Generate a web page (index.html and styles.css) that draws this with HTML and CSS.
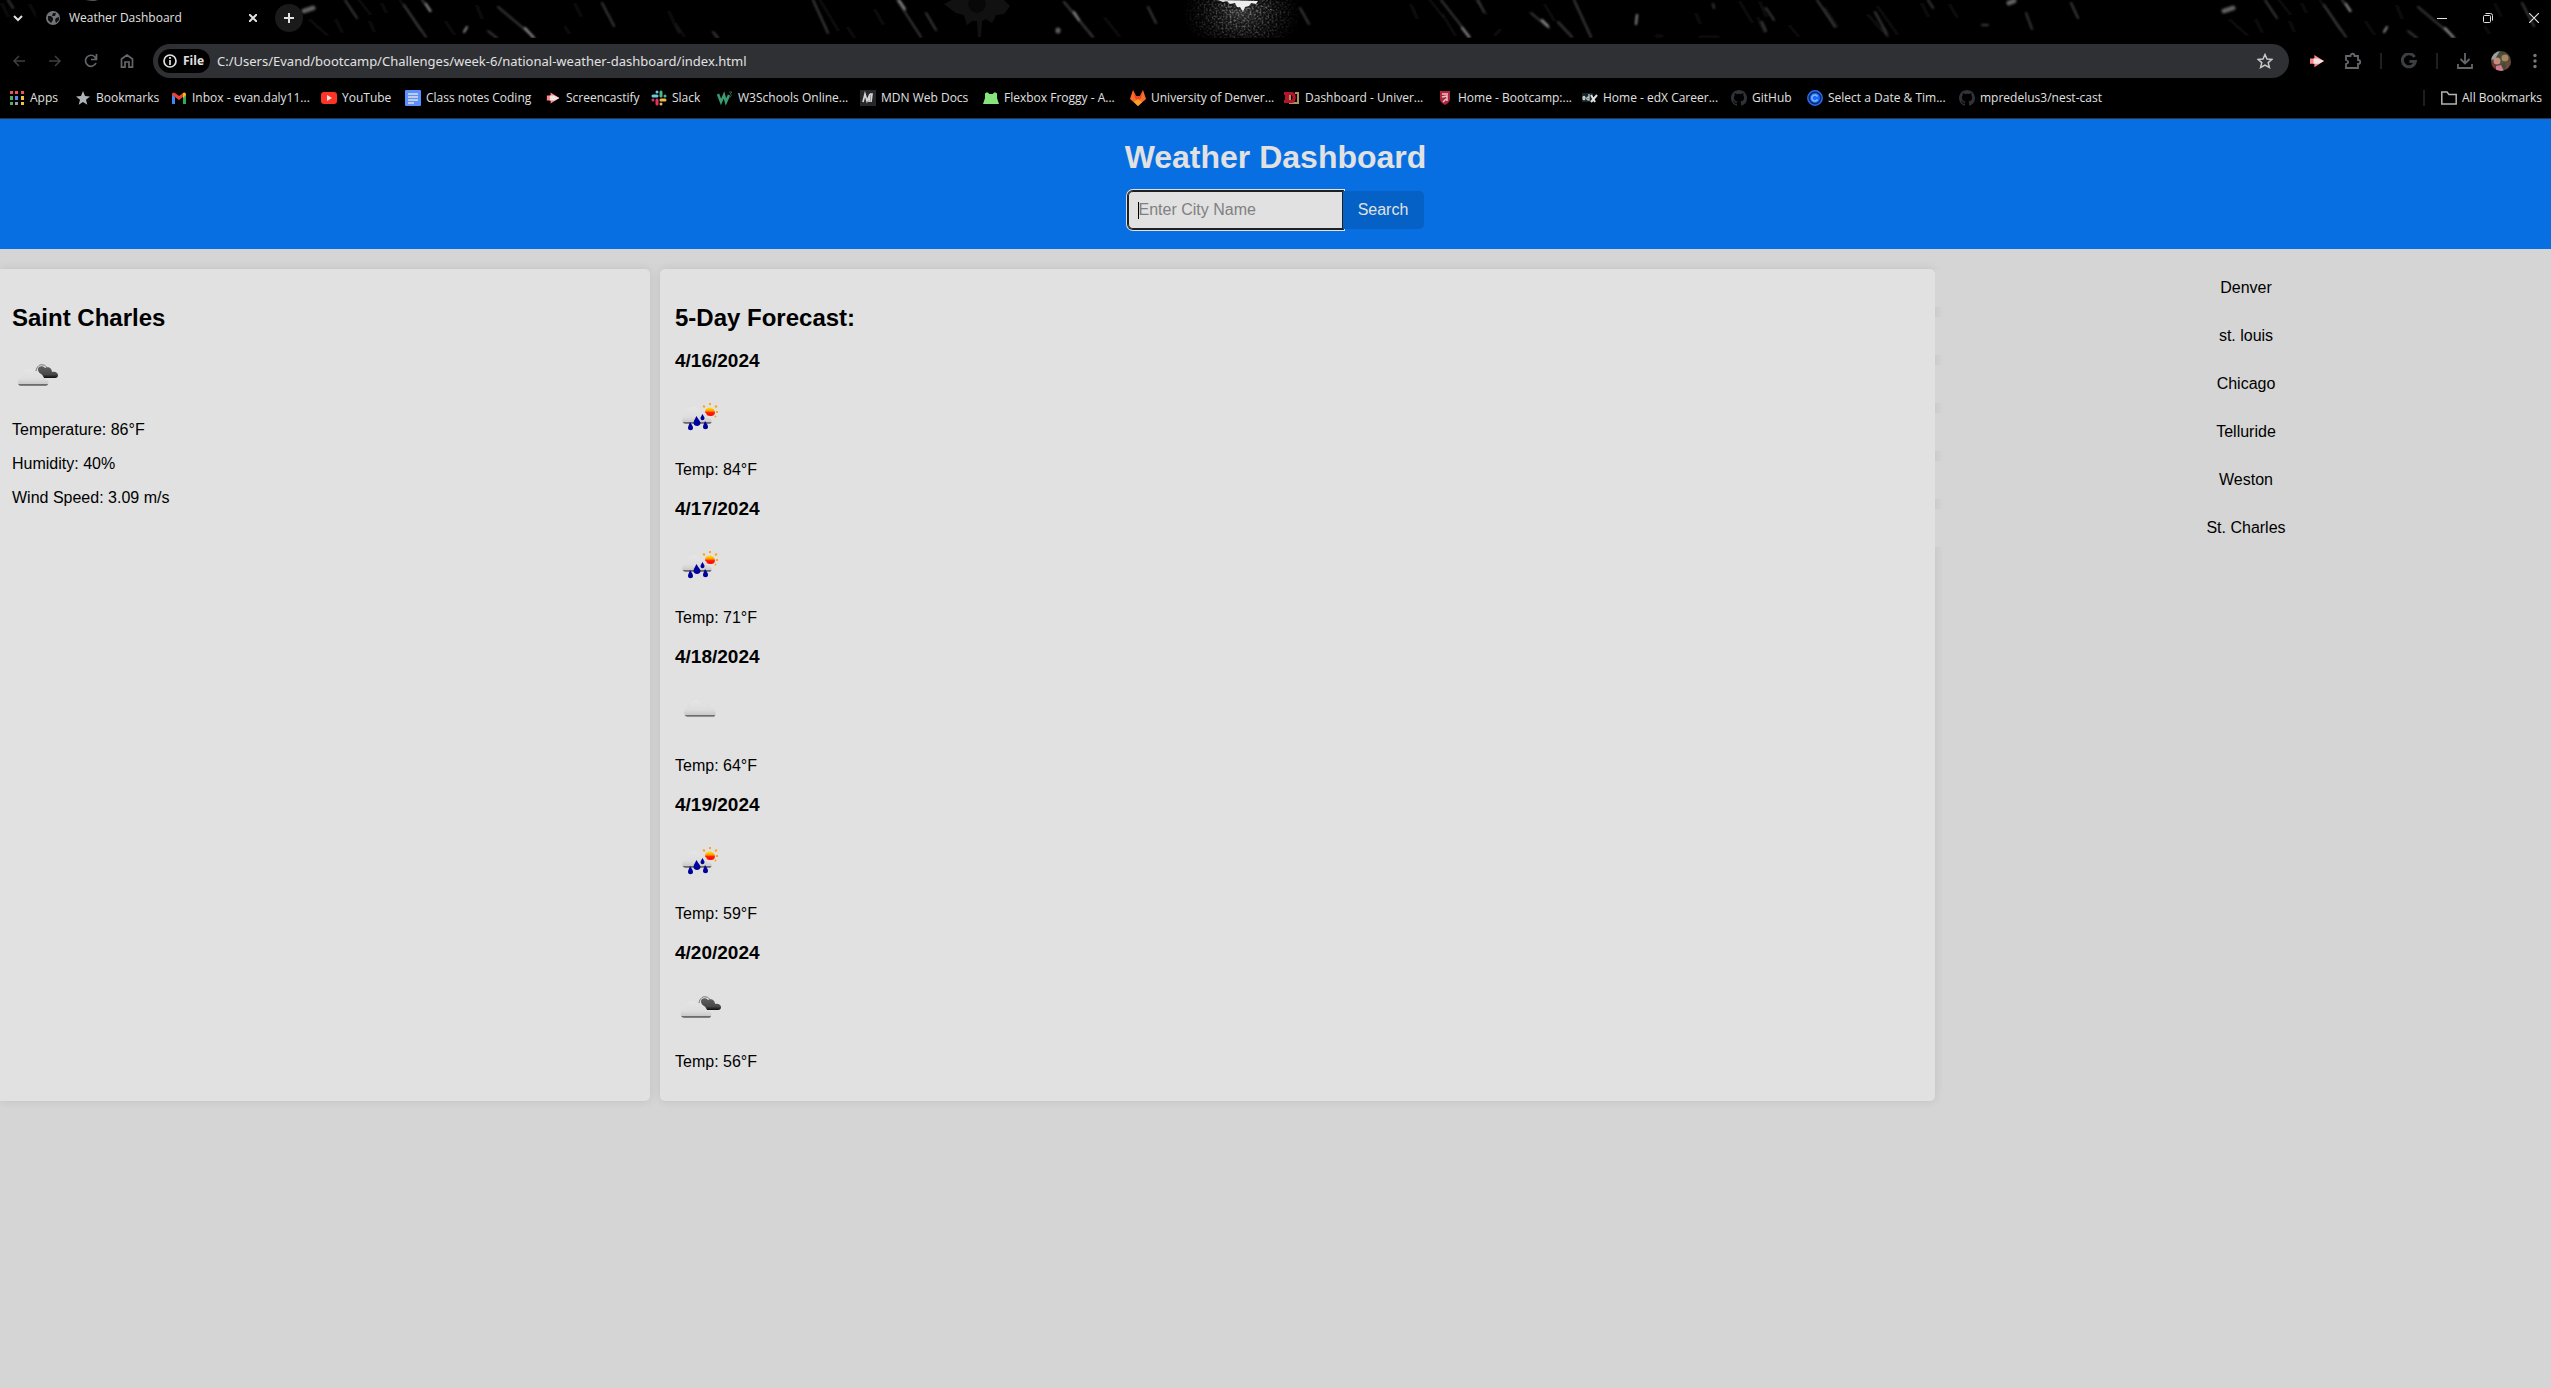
FILE: index.html
```html
<!DOCTYPE html>
<html lang="en">
<head>
<meta charset="utf-8">
<meta name="viewport" content="width=device-width, initial-scale=1">
<title>Weather Dashboard</title>
<link rel="stylesheet" href="styles.css">
</head>
<body>
<svg class="defs" aria-hidden="true">
  <defs>
    <linearGradient id="cloudFill" x1="0" y1="0" x2="0" y2="1">
      <stop offset="0" stop-color="#e6e6e6"/><stop offset=".6" stop-color="#dddddd"/><stop offset=".87" stop-color="#cacaca"/><stop offset=".91" stop-color="#6c6c6c"/><stop offset="1" stop-color="#888"/>
    </linearGradient>
    <linearGradient id="darkFill" x1="0" y1="0" x2="0" y2="1">
      <stop offset="0" stop-color="#606060"/><stop offset=".7" stop-color="#484848"/><stop offset="1" stop-color="#0c0c0c"/>
    </linearGradient>
    <linearGradient id="sunFill" x1="0" y1="0" x2="0" y2="1">
      <stop offset="0" stop-color="#ffe800"/><stop offset=".4" stop-color="#ff9a00"/><stop offset=".6" stop-color="#ff1c00"/><stop offset="1" stop-color="#ff0800"/>
    </linearGradient>
    <symbol id="broken" viewBox="0 0 50 50">
      <path d="M24 20c1-5 4-7 7-6 2 0 3 1 4 3" fill="none" stroke="#777" stroke-width="1"/>
      <path d="M26 18c0-3 5-4 7-1 3-2 7 0 7 4 3-1 6 1 6 3s-1 3-3 3H32c-1-4-6-4-6-9z" fill="url(#darkFill)"/>
      <path d="M9 35c-4 0-5-8 1-9 0-5 3-8 7-8 3 0 5 2 6 4 5-1 8 2 8 5 6 0 7 7 3 8z" fill="url(#cloudFill)"/>
    </symbol>
    <symbol id="cloud" viewBox="0 0 50 50">
      <path d="M12 30c-4-1-4-8 1-9 0-4 3-9 8-9 3 0 5 2 6 5 5-1 7 1 7 4 7-1 8 7 5 9z" fill="url(#cloudFill)" stroke="#d6d6d6" stroke-width=".4"/>
    </symbol>
    <symbol id="rain" viewBox="0 0 50 50">
      <path d="M35 12v2M28 15l2 1M42 15l-2 1M43 21h-2M41 26l-1-1" fill="none" stroke="#ffa31a" stroke-width="2"/>
      <path d="M30 21c0-6 9-6 10 0 0 3-2 4-4 4-3 0-6-1-6-4z" fill="url(#sunFill)"/>
      <path d="M10 33c-4-1-4-8 1-9 0-4 3-8 7-8s6 2 7 5c5-1 8 2 7 6 5 0 6 4 3 6z" fill="url(#cloudFill)"/>
      <path d="M15 31c2 3 3 4 3 6 0 3-5 3-5 0 0-2 1-3 2-6zM21.500 25c2 4 4 5 4 7 0 4-7 4-7 0 0-2 1-3 3-7zM30 30c2 3 3 4 3 6 0 3-5 3-5 0 0-2 1-3 2-6zM27.500 23c1 2 2 3 2 4 0 3-4 3-4 0 0-1 1-2 2-4z" fill="#00009c"/>
    </symbol>
    <symbol id="octocat" viewBox="0 0 16 16">
      <path fill="#2f3237" d="M8 0C3.580 0 0 3.580 0 8c0 3.540 2.290 6.530 5.470 7.590.4.070.55-.17.55-.38 0-.19-.01-.82-.01-1.490-2.010.37-2.530-.49-2.690-.94-.09-.23-.48-.94-.82-1.130-.28-.15-.68-.52-.01-.53.63-.01 1.080.58 1.230.82.72 1.210 1.870.87 2.330.66.07-.52.28-.87.51-1.070-1.780-.2-3.640-.89-3.640-3.950 0-.87.31-1.590.82-2.150-.08-.2-.36-1.020.08-2.120 0 0 .67-.21 2.200.82a7.600 7.600 0 0 1 4 0c1.530-1.040 2.200-.82 2.200-.82.44 1.100.16 1.920.08 2.120.51.56.82 1.270.82 2.150 0 3.070-1.870 3.750-3.650 3.950.29.25.54.73.54 1.480 0 1.070-.01 1.930-.01 2.200 0 .21.15.46.55.38A8 8 0 0 0 16 8c0-4.420-3.580-8-8-8z"/>
    </symbol>
    <symbol id="cast" viewBox="0 0 16 16">
      <path fill="#ff8684" d="M0 5h5v6H0zM5 1l11 7-11 7z"/><path fill="#f0e4e4" d="M4 5h5l7 3-6 3H4z"/>
    </symbol>
  </defs>
</svg>

<div class="browser">
  <div class="tabstrip">
    <svg class="rain-art" aria-hidden="true">
      <defs>
        <radialGradient id="glow"><stop offset="0" stop-color="#2c2c2c"/><stop offset="1" stop-color="#000" stop-opacity="0"/></radialGradient>
        <radialGradient id="fade"><stop offset="0" stop-color="#fff"/><stop offset="1" stop-color="#fff" stop-opacity="0"/></radialGradient>
        <filter id="grain"><feTurbulence type="fractalNoise" baseFrequency=".5" numOctaves="2" seed="4"/><feColorMatrix values="0 0 0 0 .2  0 0 0 0 .2  0 0 0 0 .2  3 0 0 0 -1.300"/><feComposite in2="SourceGraphic" operator="in"/></filter>
        <filter id="soft"><feGaussianBlur stdDeviation=".8"/></filter>
        <pattern id="rainTile" width="1920" height="38" patternUnits="userSpaceOnUse">
          <g fill="none" stroke-linecap="round" filter="url(#soft)">
            <path stroke="#181818" stroke-width="2" d="M2 4l6 12M30 5l7 12M310 20l17 15M336 20l6 12M359 0l11 14M400 0l20 30M382 4l4 8M446 22l8 12M477 6l5 12M370 22l4 9M565 27l4 6M575 4l6 12M669 12l10 21M676 24l8 12M820 0l18 30M848 28l6 9M875 10l8 14M985 7l6 13M1105 18l14 18M1411 5l6 13M1430 0l14 18M1443 15l12 20M1500 30l-5 5M1760 2l6 14M1790 26l8 10M1868 15l20 22M1878 7l19 27M1740 2l12 20M1758 18l6 14M1825 8l12 18M1696 14l4 9M1700 37h18M1656 36h6M1545 5l9 15M1476 0l10 14"/>
            <path stroke="#3c3c3c" stroke-width="2" d="M8 0l5 8M422 0l9 11M404 5l22 32M498 7l37 31M602 3l12 23M488 31l9 7M345 0l12 18M106 13l6 16M151 3l7 15M62 25l6 0M813 0l15 33M897 0l24 37M926 13l10 17M713 32l5 6M1064 2l29 35M1148 7l8 16M1300 8l9 16M1441 0l29 37M1478 0l6 12M1531 13l18 15M1558 22l14 15M1574 0l17 37M1766 8l8 12M1817 0l18 27M1875 12l12 22M1713 4l1 4M1762 22l4 9"/>
            <path stroke="#909090" stroke-width="2" d="M525 28l8 9M426 4l4 7M467 27l-3 5M1637 15l-1 9M1462 28l7 9M1542 20l6 6M899 0l6 9M1074 12l5 8"/>
            <path stroke="#606060" stroke-width="5" d="M304 11l9-3M1058 30l0 1M89 3l5-2"/>
          </g>
          <path fill="#111" d="M944 4l8-4h52l6 6-6 8-8 1-4 8-6-4-4 2-1 16h-3l-1-16-5 0-5 4-3-10-8-2z"/>
          <circle cx="977" cy="4" r="9" fill="#080808"/>
          <ellipse cx="1242" cy="12" rx="56" ry="40" fill="url(#glow)"/>
          <ellipse cx="1242" cy="12" rx="60" ry="44" fill="url(#fade)" filter="url(#grain)"/>
          <path fill="#eee" d="M1218 0l5 2 4-1 3 3 5-1 2 4 3 0 3 5 2-5 4-1 2-3 5 1 2-3z"/>
          <path stroke="#777" fill="none" stroke-dasharray="2 3" d="M1243 10v6M1230 6l1 18M1256 4l16 6M1221 5l6 3M1252 8l6 4"/>
        </pattern>
      </defs>
      <rect width="100%" height="38" fill="url(#rainTile)"/>
    </svg>
    <button class="icon-btn" aria-label="Search tabs"><svg width="10" height="10" viewBox="0 0 10 10"><path d="M1 3l4 4 4-4" fill="none" stroke="#e1e1e1" stroke-width="2"/></svg></button>
    <div class="tab">
      <svg width="14" height="14" viewBox="0 0 14 14"><circle cx="7" cy="7" r="7" fill="#70757a"/><path d="M2 5l3 0 2 2 0 2-2 3-3-3zM7 2l3 0-1 3-3 0zM10 7l3-1 0 3-3 3-1-3z" fill="#111"/></svg>
      <span class="tab-title">Weather Dashboard</span>
      <button class="tab-close" aria-label="Close tab"><svg width="8" height="8" viewBox="0 0 8 8"><path d="M0 0l8 8M8 0L0 8" stroke="#e1e1e1" stroke-width="2"/></svg></button>
    </div>
    <button class="new-tab" aria-label="New tab"><svg width="10" height="10" viewBox="0 0 10 10"><path d="M5 0v10M0 5h10" stroke="#e1e1e1" stroke-width="2"/></svg></button>
    <div class="window-controls">
      <button aria-label="Minimize"><svg width="10" height="10" viewBox="0 0 10 10"><path d="M0 5.500h10" stroke="#e1e1e1"/></svg></button>
      <button aria-label="Restore"><svg width="10" height="10" viewBox="0 0 10 10"><g fill="none" stroke="#e1e1e1"><rect x=".5" y="2.500" width="7" height="7" rx="1"/><path d="M2.500.5h5a2 2 0 0 1 2 2v5"/></g></svg></button>
      <button aria-label="Close"><svg width="10" height="10" viewBox="0 0 10 10"><path d="M0 0l10 10M10 0L0 10" stroke="#e1e1e1" stroke-width="1.200"/></svg></button>
    </div>
  </div>

  <div class="toolbar">
    <button class="icon-btn" aria-label="Back"><svg width="14" height="14" viewBox="0 0 14 14"><path d="M13 7H2M7 2L2 7l5 5" fill="none" stroke="#3c3f42" stroke-width="1.500"/></svg></button>
    <button class="icon-btn" aria-label="Forward"><svg width="14" height="14" viewBox="0 0 14 14"><path d="M1 7h11M7 2l5 5-5 5" fill="none" stroke="#3c3f42" stroke-width="1.500"/></svg></button>
    <button class="icon-btn" aria-label="Reload"><svg width="14" height="14" viewBox="0 0 14 14"><path d="M12 9a5.500 5.500 0 1 1-1-6l1 2M12.500 0v5.500H7" fill="none" stroke="#63676b" stroke-width="1.700"/></svg></button>
    <button class="icon-btn" aria-label="Home"><svg width="14" height="14" viewBox="0 0 14 14"><path d="M1.500 13.200V5L7 1l5.500 4v8.200H9V8H5v5.200z" fill="none" stroke="#63676b" stroke-width="1.700"/></svg></button>
    <div class="omnibox">
      <button class="file-chip"><svg width="14" height="14" viewBox="0 0 14 14"><circle cx="7" cy="7" r="6" fill="none" stroke="#e1e1e1" stroke-width="1.700"/><path d="M7 6v5M7 3v2" stroke="#e1e1e1" stroke-width="1.700"/></svg>File</button>
      <input class="url" type="text" aria-label="Address" value="C:/Users/Evand/bootcamp/Challenges/week-6/national-weather-dashboard/index.html">
      <button class="icon-btn" aria-label="Bookmark this page"><svg width="16" height="16" viewBox="0 0 16 16"><path d="M8 1.500l2 4.500 5 .4-3.800 3.200L12.400 14.500 8 12l-4.400 2.500 1.200-4.900L1 6.400 6 6z" fill="none" stroke="#c8c8c8" stroke-width="1.500"/></svg></button>
    </div>
    <button class="icon-btn" aria-label="Screencastify"><svg width="16" height="14"><use href="#cast"/></svg></button>
    <button class="icon-btn" aria-label="Extensions"><svg width="18" height="18" viewBox="0 0 18 18"><path d="M2 4h4.500c0-3 4-3 4 0H14v4c3 0 3 4 0 4v4H2v-4c3-1 3-3 0-4z" fill="none" stroke="#63676b" stroke-width="1.800"/></svg></button>
    <span class="divider"></span>
    <button class="icon-btn" aria-label="Google"><svg width="16" height="16" viewBox="0 0 16 16"><path d="M13.500 4A6.500 6.500 0 1 0 14.300 8.500H8.500" fill="none" stroke="#3c3f42" stroke-width="3"/></svg></button>
    <span class="divider"></span>
    <button class="icon-btn" aria-label="Downloads"><svg width="16" height="16" viewBox="0 0 16 16"><path d="M8 0v10M3.500 6L8 10.500 12.500 6M1 11v4h14v-4" fill="none" stroke="#63676b" stroke-width="1.800"/></svg></button>
    <button class="icon-btn" aria-label="Profile"><svg width="20" height="20" viewBox="0 0 20 20"><clipPath id="round"><circle cx="10" cy="10" r="10"/></clipPath><g clip-path="url(#round)"><path fill="#4b4638" d="M0 0h20v20H0z"/><path fill="#9aa0a0" d="M0 0h9L4 8 0 9z"/><path fill="#3f5a35" d="M8 2l4 2 1 8-4 3z"/><circle cx="6" cy="10" r="3.500" fill="#c98a7c"/><circle cx="14" cy="7" r="3.500" fill="#a98463"/><path fill="#d07a90" d="M5 15l5-1 3 6H5z"/><path fill="#8a2f2f" d="M1 12l3 2 1 6H0z"/><path fill="#6b4a34" d="M14 11l6-1v8l-5 1z"/></g></svg></button>
    <button class="icon-btn menu-btn" aria-label="Menu"><svg width="4" height="16" viewBox="0 0 4 16"><g fill="#75797d"><circle cx="2" cy="2.500" r="1.700"/><circle cx="2" cy="8" r="1.700"/><circle cx="2" cy="13.500" r="1.700"/></g></svg></button>
  </div>

  <div class="bookmarks">
    <nav class="bookmark-list" aria-label="Bookmarks">
      <a href="#"><svg viewBox="0 0 16 16"><path fill="#f0544a" d="M1 1h3v3H1zM6 1h3v3H6zM12 1h3v3h-3z"/><path fill="#4fae6a" d="M1 6h3v4H1zM1 12h3v3H1z"/><path fill="#4f8df5" d="M6 6h3v4H6z"/><path fill="#f5bd4a" d="M12 6h3v4h-3zM12 12h3v3h-3z"/><path fill="#9aa0a6" d="M6 12h3v3H6z"/></svg>Apps</a>
      <a href="#"><svg viewBox="0 0 16 16"><path fill="#aeb3b8" d="M8 1l2 5 5 .4-4 3.300 1.300 5L8 12l-4.300 2.700 1.300-5-4-3.300L6 6z"/></svg>Bookmarks</a>
      <a href="#"><svg viewBox="0 0 16 16"><path fill="#4285f4" d="M1 4l3 3v7H1z"/><path fill="#34a853" d="M12 7l3-3v10h-3z"/><path fill="#ea4335" d="M1 5c0-3 2-3 3-2l4 3 4-3v4l-4 3-4-3z"/><path fill="#fbbc04" d="M12 3c1-1 3-1 3 2l-3 3z"/></svg>Inbox - evan.daly11...</a>
      <a href="#"><svg viewBox="0 0 16 16"><rect y="2" width="16" height="12" rx="3" fill="#ff3326"/><path fill="#e8e8e8" d="M6 5l5 3-5 3z"/></svg>YouTube</a>
      <a href="#"><svg viewBox="0 0 16 16"><rect width="16" height="16" rx="1" fill="#5a90ff"/><path stroke="#e1e1e1" stroke-width="1.500" d="M3 4h10M3 7h10M3 10h10M3 13h6"/></svg>Class notes Coding</a>
      <a href="#"><svg viewBox="-2 -2 20 20"><use href="#cast" width="16" height="16"/></svg>Screencastify</a>
      <a href="#"><svg viewBox="0 0 16 16"><g fill="none" stroke-width="3" stroke-linecap="round"><path stroke="#6ecadc" d="M2 6h4M6 2v0"/><path stroke="#4fb58a" d="M10 2v4M14 6v0"/><path stroke="#ecb84e" d="M10 10h4M10 14v0"/><path stroke="#e0325e" d="M6 10v4M2 10v0"/></g></svg>Slack</a>
      <a href="#"><svg viewBox="0 0 16 16"><path fill="none" stroke="#3b9c70" stroke-width="2.500" d="M1 4l3 8 3-7 2 7 3-7"/><path fill="none" stroke="#25684a" d="M12 2h3l-2 2c2 0 2 3-1 3"/></svg>W3Schools Online...</a>
      <a href="#"><svg viewBox="0 0 16 16"><path fill="#26262b" d="M0 0h16v16H0z"/><path fill="none" stroke="#d4d4d4" stroke-width="1.700" d="M3 12L5 4l2 7 3-7-1 8M10 4h2l-1 8"/></svg>MDN Web Docs</a>
      <a href="#"><svg viewBox="0 0 16 16"><path fill="#86e57d" d="M2 4c0-2 4-2 4 0h4c0-2 4-2 4 0v4l2 6H0l2-6z"/></svg>Flexbox Froggy - A...</a>
      <a href="#"><svg viewBox="0 0 16 16"><path fill="#fc6d26" d="M0 9L3 0l3 6h4l3-6 3 9-8 7z"/><path fill="#e8442a" d="M3 0l3 6h4l3-6-2 8-3 3-3-3z"/><path fill="#fca326" d="M4 12l4-3 4 3-4 4z"/></svg>University of Denver...</a>
      <a href="#"><svg viewBox="0 0 16 16"><path fill="none" stroke="#a9955c" stroke-width="2" d="M11 3h4M14 3v10H6v-2"/><path fill="#b5142e" fill-rule="evenodd" d="M0 2h8c5 0 5 11 0 11H0v-3h1V5H0zM5 5v5h2c2 0 2-5 0-5z"/><path fill="#a9955c" d="M5 5h2v5H5z"/></svg>Dashboard - Univer...</a>
      <a href="#"><svg viewBox="0 0 16 16"><path fill="#b0253a" d="M3 1h10v8c0 3-3 5-5 6-2-1-5-3-5-6z"/><path stroke="#e4c6ca" stroke-width="1.500" fill="none" d="M5 4h6M5 7l5-1v5M6 12l3-3"/></svg>Home - Bootcamp:...</a>
      <a href="#"><svg viewBox="0 0 16 16"><path fill="#16272b" d="M0 3h11v9H0z"/><path fill="none" stroke="#c4cbcc" stroke-width="1.300" d="M1 8h2c0-2-2-2-2 0s1 2 2 1M7 4v6c-3 0-3-3 0-3"/><path fill="none" stroke="#e1e1e1" stroke-width="2" d="M9 5l4 7M15 5l-6 7"/></svg>Home - edX Career...</a>
      <a href="#"><svg><use href="#octocat"/></svg>GitHub</a>
      <a href="#"><svg viewBox="0 0 16 16"><circle cx="8" cy="8" r="7.200" fill="#0a2a66" stroke="#2d6af0" stroke-width="1.500"/><circle cx="8" cy="8" r="5" fill="#1769ff"/><path fill="none" stroke="#7fb4ff" stroke-width="1.700" d="M10.500 6.500a3 3 0 1 0 0 3"/></svg>Select a Date &amp; Tim...</a>
      <a href="#"><svg><use href="#octocat"/></svg>mpredelus3/nest-cast</a>
    </nav>
    <a class="all-bookmarks" href="#"><svg viewBox="0 0 16 16"><path d="M.8 3.200V14h14.400V4.500H8L6 2H.8z" fill="none" stroke="#b4b4b4" stroke-width="1.500"/></svg>All Bookmarks</a>
  </div>
</div>

<header class="page-header">
  <h1>Weather Dashboard</h1>
  <form class="search">
    <input type="text" class="city-input" placeholder="Enter City Name" aria-label="City name">
    <button type="button" class="search-btn">Search</button>
  </form>
</header>

<main class="dashboard">
  <section class="card current">
    <h2>Saint Charles</h2>
    <svg class="weather"><use href="#broken"/></svg>
    <p>Temperature: 86°F</p>
    <p>Humidity: 40%</p>
    <p>Wind Speed: 3.09 m/s</p>
  </section>
  <section class="card forecast">
    <h2>5-Day Forecast:</h2>
    <article><h3>4/16/2024</h3><svg class="weather"><use href="#rain"/></svg><p>Temp: 84°F</p></article>
    <article><h3>4/17/2024</h3><svg class="weather"><use href="#rain"/></svg><p>Temp: 71°F</p></article>
    <article><h3>4/18/2024</h3><svg class="weather"><use href="#cloud"/></svg><p>Temp: 64°F</p></article>
    <article><h3>4/19/2024</h3><svg class="weather"><use href="#rain"/></svg><p>Temp: 59°F</p></article>
    <article><h3>4/20/2024</h3><svg class="weather"><use href="#broken"/></svg><p>Temp: 56°F</p></article>
  </section>
  <aside class="history">
    <button>Denver</button>
    <button>st. louis</button>
    <button>Chicago</button>
    <button>Telluride</button>
    <button>Weston</button>
    <button>St. Charles</button>
  </aside>
</main>
</body>
</html>
```

FILE: styles.css
```css
* { box-sizing: border-box; }

body {
  margin: 0;
  min-height: 100vh;
  background: #d5d5d5;
  color: #000;
  font: 16px/18px "Liberation Sans", Arial, sans-serif;
}

button, input { font: inherit; color: inherit; border: 0; padding: 0; background: none; }
button { cursor: pointer; }
svg { display: block; flex: none; }
.defs { position: absolute; width: 0; height: 0; }

/* Browser frame */
.browser {
  background: #000;
  color: #e1e1e1;
  border-bottom: 1px solid #333;
  font: 12px/16px "Open Sans", "Noto Sans", sans-serif;
}

.tabstrip { position: relative; display: flex; align-items: center; height: 38px; padding-bottom: 2px; }
.tabstrip > * { position: relative; }
.tabstrip > .rain-art { position: absolute; top: 0; left: 0; width: 100%; height: 38px; }

.icon-btn { display: flex; align-items: center; justify-content: center; flex: none; width: 36px; height: 34px; }

.tab { display: flex; align-items: center; width: 233px; height: 34px; padding: 0 10px; gap: 9px; background: #000; }
.tab-title { flex: 1; white-space: nowrap; }
.tab-close { display: flex; padding: 2px; }

.new-tab { display: flex; align-items: center; justify-content: center; width: 28px; height: 28px; margin-left: 6px; border-radius: 14px; background: #1a1a1a; }

.window-controls { display: flex; margin-left: auto; padding-right: 4px; }
.window-controls button { display: flex; align-items: center; justify-content: center; width: 46px; height: 34px; }
.window-controls button:last-child { width: 26px; margin-left: 10px; }

.toolbar { display: flex; align-items: center; height: 46px; padding: 0 0 0 1px; }
.omnibox { display: flex; flex: 1; align-items: center; height: 34px; margin: 0 10px 0 8px; padding: 0 6px 0 5px; border-radius: 17px; background: #2f3034; }
.file-chip { display: flex; align-items: center; gap: 6px; height: 24px; padding: 0 6px 0 5px; border-radius: 12px; background: #000; font-weight: 700; font-size: 12px; }
.url { flex: 1; min-width: 0; height: 24px; margin-left: 7px; font-family: "Noto Sans", sans-serif; font-size: 13px; outline: 0; }
.divider { flex: none; width: 2px; height: 16px; margin: 0 9px; background: #1e1f21; }
.menu-btn { width: 32px; }

.bookmarks { display: flex; align-items: center; justify-content: space-between; height: 34px; padding: 0 9px 6px 9px; }
.bookmarks a { display: flex; align-items: center; gap: 5px; color: inherit; text-decoration: none; white-space: nowrap; }
.bookmarks svg { width: 16px; height: 16px; }
.bookmark-list { display: grid; grid-template-columns: 66px 96px 150px 84px 140px 106px 66px 143px 123px 147px 154px 153px 145px 149px 76px 152px 150px; }
.bookmarks .all-bookmarks { padding-left: 16px; border-left: 2px solid #1e1f21; }

/* Page header */
.page-header { display: flex; flex-direction: column; align-items: center; padding: 20px; background: #076fe2; }
.page-header h1 { margin: 0; color: #e1e1e1; font-size: 32px; line-height: 36px; }
.search { display: flex; margin-top: 16px; }
.city-input {
  width: 215px;
  height: 38px;
  padding: 0 11px;
  border-radius: 5px 0 0 5px;
  outline: 0;
  background: linear-gradient(#000, #000) 10px 11px / 1px 17px no-repeat #e1e1e1;
  box-shadow: inset 0 0 0 1px #202020, 0 0 0 1px #202020, 0 0 0 2px #e1e1e1;
}
.city-input::placeholder { color: #808080; opacity: 1; }
.search-btn { position: relative; width: 81px; height: 38px; border-radius: 0 5px 5px 0; background: #0561c5; color: #e1e1e1; }

/* Dashboard */
.dashboard { display: grid; grid-template-columns: minmax(0, 660fr) minmax(0, 1275fr) minmax(0, 616fr); margin-top: 20px; }
.card { padding: 15px 15px 16px; border-radius: 5px; background: #e1e1e1; box-shadow: 0 0 10px rgba(0, 0, 0, .1); }
.card h2 { margin: 20px 0; font-size: 24px; line-height: 27px; }
.card h3 { margin: 0 0 19px; font-size: 19px; line-height: 22px; }
.card p { margin: 16px 0; }
.weather { width: 50px; height: 50px; margin-bottom: 20px; }

.current { margin-right: 10px; padding-left: 12px; border-radius: 0 5px 5px 0; }
.forecast h2 { margin-bottom: 19px; }
.forecast article p { margin: 0 0 19px; }
.forecast article:last-child p { margin-bottom: 14px; }

.history { display: flex; flex-direction: column; gap: 10px; }
.history button { position: relative; height: 38px; padding-left: 6px; background: #d5d5d5; }
```
